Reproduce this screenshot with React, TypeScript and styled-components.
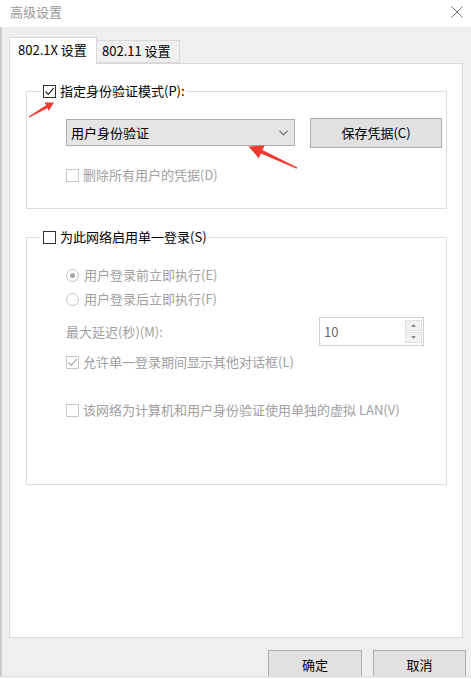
import React from 'react';
import styled, { createGlobalStyle } from 'styled-components';

const GlobalStyle = createGlobalStyle`
  html, body {
    margin: 0;
    padding: 0;
    background: #ffffff;
  }
  body {
    font-family: "Noto Sans CJK SC", "Noto Sans", "Liberation Sans", sans-serif;
    font-size: 13px;
    line-height: 16px;
    color: #000;
  }
`;

const Window = styled.div`
  position: relative;
  width: 471px;
  height: 679px;
  display: flex;
  flex-direction: column;
  overflow: hidden;
  background: #fff;
`;

const TitleBar = styled.div`
  height: 27px;
  flex: none;
  display: flex;
  align-items: center;
  justify-content: space-between;
  padding: 0 8px 3px 10px;
  box-sizing: border-box;
  color: #9a9a9a;
  font-size: 13px;
`;

const Body = styled.div`
  height: 649px;
  flex: none;
  box-sizing: border-box;
  background: #efefef;
  border-left: 2px solid #cbcbcb;
  padding: 10px 8px 0 7px;
  overflow: hidden;
  display: flex;
  flex-direction: column;
`;

const BottomStrip = styled.div`
  height: 3px;
  flex: none;
  background: #f7f7f7;
  border-top: 1px solid #dadada;
`;

const TabRow = styled.div`
  display: flex;
  align-items: flex-end;
  height: 26px;
`;

const Tab = styled.div<{ $active?: boolean }>`
  position: relative;
  z-index: ${p => (p.$active ? 1 : 0)};
  box-sizing: border-box;
  height: ${p => (p.$active ? '27px' : '23px')};
  margin-bottom: ${p => (p.$active ? '-1px' : '0')};
  width: ${p => (p.$active ? '88px' : '83px')};
  padding-left: ${p => (p.$active ? '8px' : '5px')};
  padding-top: ${p => (p.$active ? '4px' : '2px')};
  background: ${p => (p.$active ? '#ffffff' : '#f0f0f0')};
  border: 1px solid #d9d9d9;
  border-bottom: ${p => (p.$active ? 'none' : '1px solid #d9d9d9')};
  border-left: ${p => (p.$active ? '1px solid #d9d9d9' : 'none')};
  font-size: 13px;
`;

const Panel = styled.div`
  height: 575px;
  flex: none;
  box-sizing: border-box;
  background: #fff;
  border: 1px solid #d9d9d9;
  padding: 19px 15px 0 16px;
  display: flex;
  flex-direction: column;
`;

const Group = styled.fieldset<{ $gap?: number; $bottom: number }>`
  margin: ${p => p.$gap ?? 0}px 0 0 0;
  padding: 0 22px ${p => p.$bottom}px 39px;
  border: 1px solid #dcdcdc;
  min-width: 0;
`;

const Legend = styled.legend`
  margin-left: -25px;
  padding: 0 2px;
  display: flex;
  align-items: center;
  height: 16px;
`;

const Row = styled.div<{ $top: number }>`
  display: flex;
  align-items: center;
  margin-top: ${p => p.$top}px;
  min-height: 16px;
`;

const Label = styled.span<{ $disabled?: boolean }>`
  color: ${p => (p.$disabled ? '#a0a0a0' : '#000')};
  white-space: nowrap;
`;

const Box = styled.span<{ $disabled?: boolean }>`
  box-sizing: border-box;
  width: 13px;
  height: 13px;
  flex: none;
  border: 1px solid ${p => (p.$disabled ? '#c8c8c8' : '#333')};
  background: #fff;
  display: flex;
  align-items: center;
  justify-content: center;
  margin-right: 4px;
`;

const Radio = styled.span<{ $on?: boolean }>`
  box-sizing: border-box;
  width: 13px;
  height: 13px;
  flex: none;
  border-radius: 50%;
  border: 1px solid #c4c4c4;
  background: #fff;
  display: flex;
  align-items: center;
  justify-content: center;
  margin-right: 5px;

  &::after {
    content: '';
    display: ${p => (p.$on ? 'block' : 'none')};
    width: 5px;
    height: 5px;
    border-radius: 50%;
    background: #a8a8a8;
  }
`;

const Select = styled.div`
  box-sizing: border-box;
  flex: none;
  width: 229px;
  height: 27px;
  background: #e5e5e5;
  border: 1px solid #adadad;
  display: flex;
  align-items: center;
  justify-content: space-between;
  padding: 0 6px 0 4px;
  font-size: 13px;
`;

const Button = styled.div<{ $w: number }>`
  box-sizing: border-box;
  width: ${p => p.$w}px;
  height: 30px;
  flex: none;
  background: #e1e1e1;
  border: 1px solid #adadad;
  display: flex;
  align-items: center;
  justify-content: center;
  font-size: 13px;
`;

const SaveButton = styled(Button)`
  margin-left: 15px;
  align-self: flex-start;
  margin-top: 1px;
`;

const Spin = styled.div`
  box-sizing: border-box;
  margin-left: auto;
  width: 105px;
  height: 29px;
  border: 1px solid #cfcfcf;
  background: #fff;
  display: flex;
  align-items: stretch;
`;

const SpinValue = styled.span`
  flex: 1;
  padding-left: 4px;
  display: flex;
  align-items: center;
  color: #6a6a6a;
`;

const SpinArrows = styled.div`
  width: 17px;
  display: flex;
  flex-direction: column;
  padding: 2px 1px 2px 0;
  gap: 1px;
`;

const SpinButton = styled.span`
  flex: 1;
  background: #f2f2f2;
  border: 1px solid #dedede;
  display: flex;
  align-items: center;
  justify-content: center;
`;

const Footer = styled.div`
  display: flex;
  justify-content: flex-end;
  gap: 11px;
  margin: 12px -3px 0 0;
`;

const Overlay = styled.svg`
  position: absolute;
  left: 0;
  top: 0;
  pointer-events: none;
`;

const Check = ({ color }: { color: string }) => (
  <svg width="11" height="11" viewBox="0 0 11 11">
    <path d="M1.5 5.5 L4.3 8.3 L9.7 2.2" fill="none" stroke={color} strokeWidth="1.2" />
  </svg>
);

const CheckBox = ({ checked, disabled }: { checked?: boolean; disabled?: boolean }) => (
  <Box $disabled={disabled}>{checked && <Check color={disabled ? '#a8a8a8' : '#222'} />}</Box>
);

const Tri = ({ up }: { up?: boolean }) => (
  <svg width="5" height="3" viewBox="0 0 5 3">
    <path d={up ? 'M0 3 L2.5 0 L5 3 Z' : 'M0 0 L2.5 3 L5 0 Z'} fill="#8a8a8a" />
  </svg>
);

export default function App() {
  return (
    <Window>
      <GlobalStyle />
      <TitleBar>
        <span>高级设置</span>
        <svg width="12" height="12" viewBox="0 0 12 12">
          <path d="M0.5 0.5 L11.5 11.5 M11.5 0.5 L0.5 11.5" stroke="#7a7a7a" strokeWidth="1" />
        </svg>
      </TitleBar>
      <Body>
        <TabRow>
          <Tab $active>802.1X 设置</Tab>
          <Tab>802.11 设置</Tab>
        </TabRow>
        <Panel>
          <Group $bottom={25}>
            <Legend>
              <CheckBox checked />
              <Label>指定身份验证模式(P):</Label>
            </Legend>
            <Row $top={18}>
              <Select>
                <span>用户身份验证</span>
                <svg width="9" height="6" viewBox="0 0 9 6">
                  <path d="M0.5 0.8 L4.5 4.8 L8.5 0.8" fill="none" stroke="#606060" strokeWidth="1.1" />
                </svg>
              </Select>
              <SaveButton $w={132}>保存凭据(C)</SaveButton>
            </Row>
            <Row $top={19}>
              <CheckBox disabled />
              <Label $disabled>删除所有用户的凭据(D)</Label>
            </Row>
          </Group>

          <Group $gap={20} $bottom={66}>
            <Legend>
              <CheckBox />
              <Label>为此网络启用单一登录(S)</Label>
            </Legend>
            <Row $top={22}>
              <Radio $on />
              <Label $disabled>用户登录前立即执行(E)</Label>
            </Row>
            <Row $top={8}>
              <Radio />
              <Label $disabled>用户登录后立即执行(F)</Label>
            </Row>
            <Row $top={10}>
              <Label $disabled>最大延迟(秒)(M):</Label>
              <Spin>
                <SpinValue>10</SpinValue>
                <SpinArrows>
                  <SpinButton><Tri up /></SpinButton>
                  <SpinButton><Tri /></SpinButton>
                </SpinArrows>
              </Spin>
            </Row>
            <Row $top={8}>
              <CheckBox checked disabled />
              <Label $disabled>允许单一登录期间显示其他对话框(L)</Label>
            </Row>
            <Row $top={32}>
              <CheckBox disabled />
              <Label $disabled>该网络为计算机和用户身份验证使用单独的虚拟 LAN(V)</Label>
            </Row>
          </Group>
        </Panel>
        <Footer>
          <Button $w={94}>确定</Button>
          <Button $w={93}>取消</Button>
        </Footer>
      </Body>
      <BottomStrip />
      <Overlay width="471" height="679" viewBox="0 0 471 679">
        <polygon
          points="54,102.5 48.6,111 47.6,107.9 29.2,117.4 28.6,116.4 46.2,105.3 44.4,102.6"
          fill="#ee3b30"
        />
        <polygon
          points="248.5,146.5 264.6,145.4 262.5,150 297.4,167.4 296.6,168.8 260.9,153.6 258.8,158.2"
          fill="#ee3b30"
        />
      </Overlay>
    </Window>
  );
}
